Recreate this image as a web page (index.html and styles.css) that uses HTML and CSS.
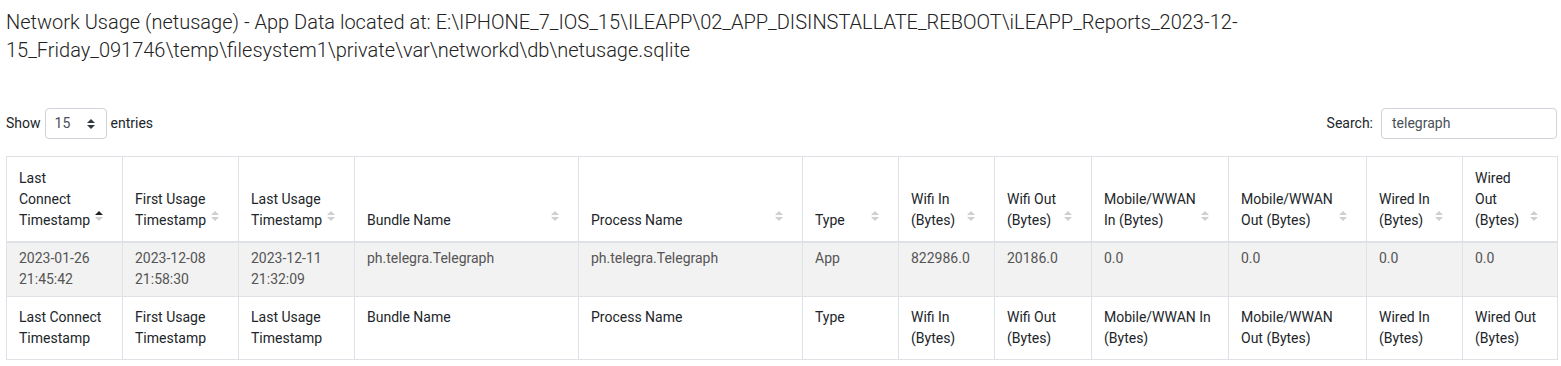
FILE: index.html
```html
<!DOCTYPE html>
<html lang="en">
<head>
    <meta charset="UTF-8">
    <title>Network Usage (netusage)</title>
    <link rel="stylesheet" href="styles.css">
</head>
<body>
    <div class="page">
        <h4 class="report-title">Network Usage (netusage) - App Data located at: E:\IPHONE_7_IOS_15\ILEAPP\02_APP_DISINSTALLATE_REBOOT\iLEAPP_Reports_2023-12-15_Friday_091746\temp\filesystem1\private\var\networkd\db\netusage.sqlite</h4>

        <div class="dt-controls">
            <label class="dt-length">Show
                <span class="dt-select">15 <span class="select-arrows"></span></span>
                entries</label>
            <label class="dt-search">Search:
                <span class="dt-input">telegraph</span></label>
        </div>

        <table class="data-table">
            <colgroup>
                <col class="w116"><col class="w116"><col class="w116">
                <col class="w224"><col class="w224">
                <col class="w96"><col class="w96"><col class="w97">
                <col class="w137"><col class="w138">
                <col class="w96"><col class="w95">
            </colgroup>
            <thead>
                <tr>
                    <th class="sorting asc">Last Connect Timestamp</th>
                    <th class="sorting">First Usage Timestamp</th>
                    <th class="sorting">Last Usage Timestamp</th>
                    <th class="sorting">Bundle Name</th>
                    <th class="sorting">Process Name</th>
                    <th class="sorting">Type</th>
                    <th class="sorting">Wifi In (Bytes)</th>
                    <th class="sorting">Wifi Out (Bytes)</th>
                    <th class="sorting">Mobile/WWAN In (Bytes)</th>
                    <th class="sorting">Mobile/WWAN Out (Bytes)</th>
                    <th class="sorting">Wired In (Bytes)</th>
                    <th class="sorting">Wired Out (Bytes)</th>
                </tr>
            </thead>
            <tbody>
                <tr class="odd">
                    <td>2023-01-26 21:45:42</td>
                    <td>2023-12-08 21:58:30</td>
                    <td>2023-12-11 21:32:09</td>
                    <td>ph.telegra.Telegraph</td>
                    <td>ph.telegra.Telegraph</td>
                    <td>App</td>
                    <td>822986.0</td>
                    <td>20186.0</td>
                    <td>0.0</td>
                    <td>0.0</td>
                    <td>0.0</td>
                    <td>0.0</td>
                </tr>
            </tbody>
            <tfoot>
                <tr>
                    <th>Last Connect Timestamp</th>
                    <th>First Usage Timestamp</th>
                    <th>Last Usage Timestamp</th>
                    <th>Bundle Name</th>
                    <th>Process Name</th>
                    <th>Type</th>
                    <th>Wifi In (Bytes)</th>
                    <th>Wifi Out (Bytes)</th>
                    <th>Mobile/WWAN In (Bytes)</th>
                    <th>Mobile/WWAN Out (Bytes)</th>
                    <th>Wired In (Bytes)</th>
                    <th>Wired Out (Bytes)</th>
                </tr>
            </tfoot>
        </table>
    </div>
</body>
</html>
```

FILE: styles.css
```css
body {
    margin: 0;
    font-family: Roboto, "Liberation Sans", sans-serif;
    font-size: 14px;
    line-height: 21px;
    color: #212529;
    background: #fff;
}
.page {
    padding: 8px 4px 0 6px;
}
.report-title {
    font-size: 20px;
    font-weight: 300;
    line-height: 28px;
    color: #222;
    margin: 0 0 44px 0;
}
.dt-controls {
    display: flex;
    justify-content: space-between;
    align-items: center;
    font-size: 14px;
    margin-bottom: 17px;
}
.dt-length, .dt-search {
    display: flex;
    align-items: center;
    gap: 4px;
}
.dt-select {
    display: inline-flex;
    align-items: center;
    justify-content: space-between;
    box-sizing: border-box;
    width: 62px;
    height: 31px;
    padding: 0 11px 0 9px;
    border: 1px solid #ced4da;
    border-radius: 4px;
    font-size: 14px;
    color: #495057;
}
.select-arrows {
    position: relative;
    width: 8px;
    height: 10px;
}
.select-arrows::before, .select-arrows::after {
    content: "";
    position: absolute;
    left: 0;
    border-left: 4px solid transparent;
    border-right: 4px solid transparent;
}
.select-arrows::before {
    top: 0;
    border-bottom: 4px solid #343a40;
}
.select-arrows::after {
    bottom: 0;
    border-top: 4px solid #343a40;
}
.dt-search {
    gap: 8px;
}
.dt-input {
    display: inline-flex;
    align-items: center;
    box-sizing: border-box;
    width: 176px;
    height: 31px;
    padding: 0 10px;
    border: 1px solid #ced4da;
    border-radius: 4px;
    font-size: 14px;
    color: #495057;
}
.data-table {
    width: 100%;
    table-layout: fixed;
    border-collapse: collapse;
    border: 1px solid #dee2e6;
}
.w95 { width: 95px; }
.w96 { width: 96px; }
.w97 { width: 97px; }
.w116 { width: 116px; }
.w137 { width: 137px; }
.w138 { width: 138px; }
.w224 { width: 224px; }
.data-table th, .data-table td {
    border: 1px solid #dee2e6;
    text-align: left;
    font-weight: 400;
}
.data-table thead th {
    position: relative;
    vertical-align: bottom;
    padding: 11px 30px 10px 12px;
    border-bottom: 2px solid #dee2e6;
    color: #212529;
}
.data-table td {
    vertical-align: top;
    padding: 5px 12px 6px 12px;
    color: #555;
}
.data-table tr.odd td {
    background: #f2f2f2;
}
.data-table tfoot th {
    vertical-align: top;
    padding: 10px 12px;
    color: #212529;
}
.sorting::before, .sorting::after {
    content: "";
    position: absolute;
    right: 19px;
    border-left: 4px solid transparent;
    border-right: 4px solid transparent;
}
.sorting::before {
    bottom: 26px;
    border-bottom: 4px solid #cfcfcf;
}
.sorting::after {
    bottom: 20px;
    border-top: 4px solid #cfcfcf;
}
.sorting.asc::before {
    border-bottom-color: #222;
}
```
